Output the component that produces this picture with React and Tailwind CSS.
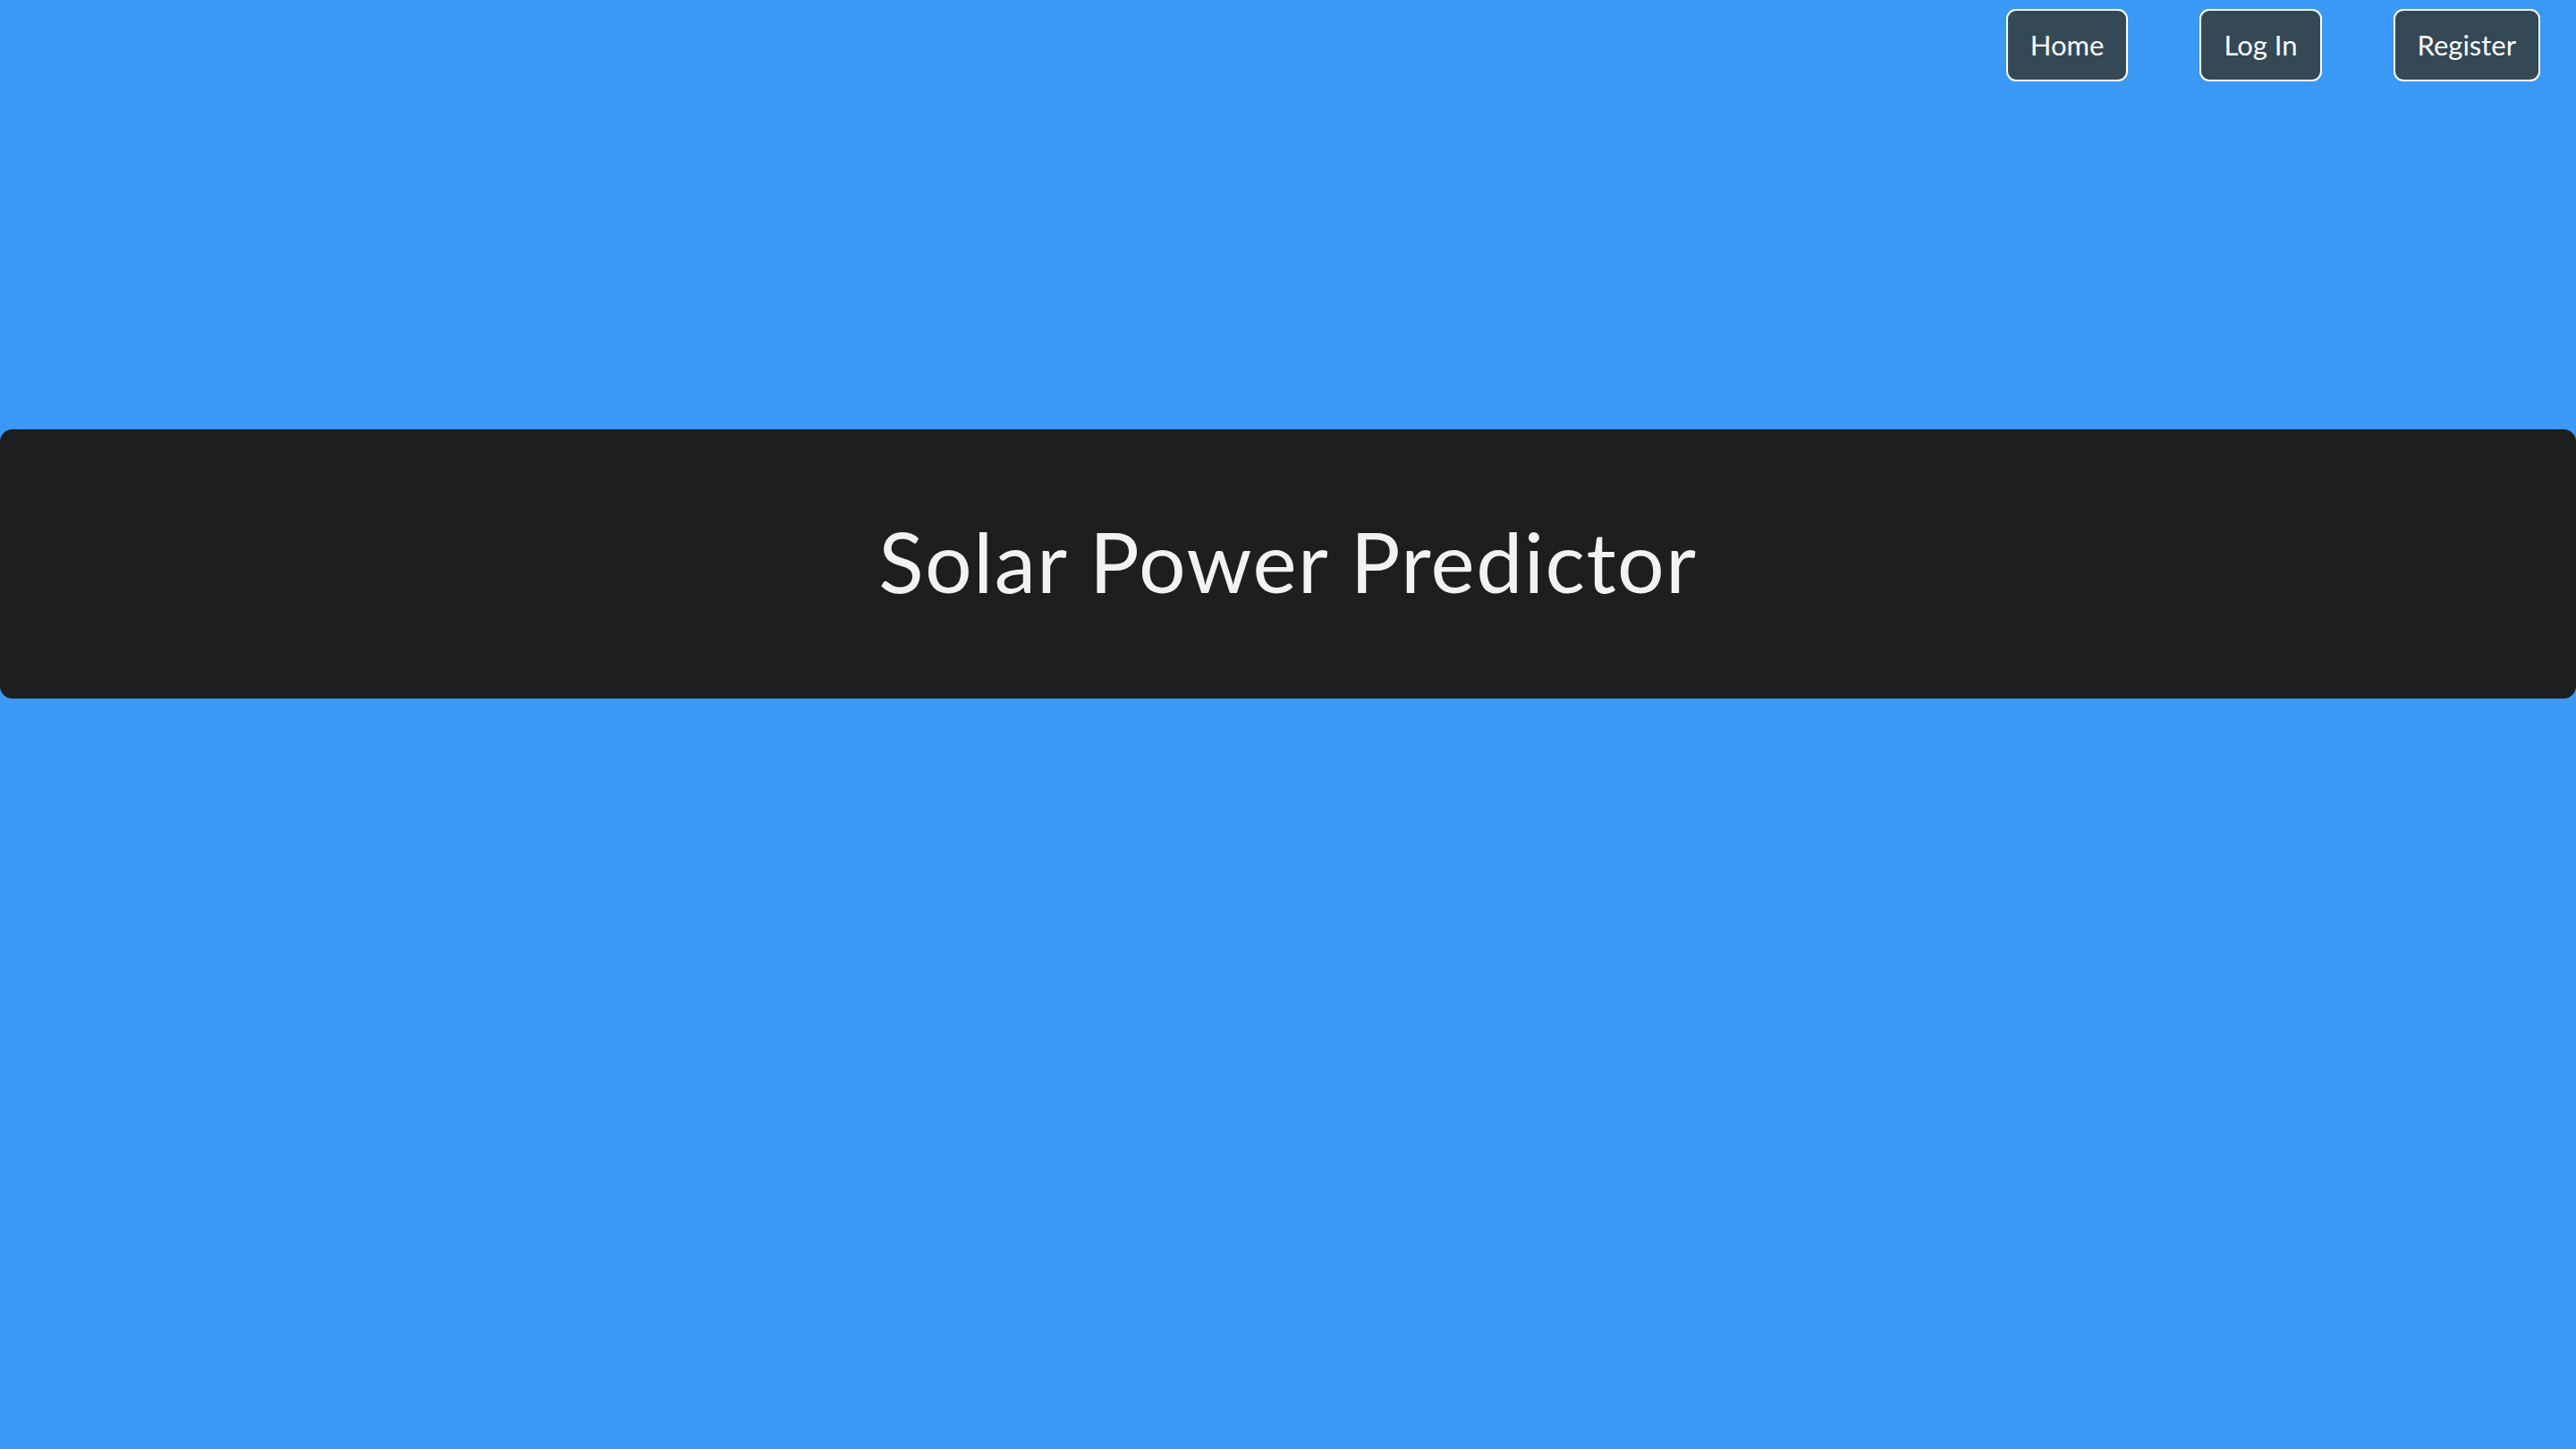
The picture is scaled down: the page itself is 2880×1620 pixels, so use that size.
export default function App() {
  const links = ["Home", "Log In", "Register"];

  return (
    <div className="min-h-screen bg-[#3b99f6] font-['Lato','Open_Sans',sans-serif] text-[#f2f2f2]">
      <nav className="flex justify-end gap-[80px] pt-[10px] pr-[40px]">
        {links.map((l) => (
          <button
            key={l}
            type="button"
            className="h-[81px] px-[25px] rounded-[11px] border-2 border-white bg-[#344955] text-[31px] text-white"
          >
            {l}
          </button>
        ))}
      </nav>

      <header className="mt-[389px] h-[301px] rounded-[14px] bg-[#1d1e20] flex items-center justify-center pb-[6px]">
        <h1 className="text-[93px] font-normal tracking-[1.5px]">Solar Power Predictor</h1>
      </header>
    </div>
  );
}
